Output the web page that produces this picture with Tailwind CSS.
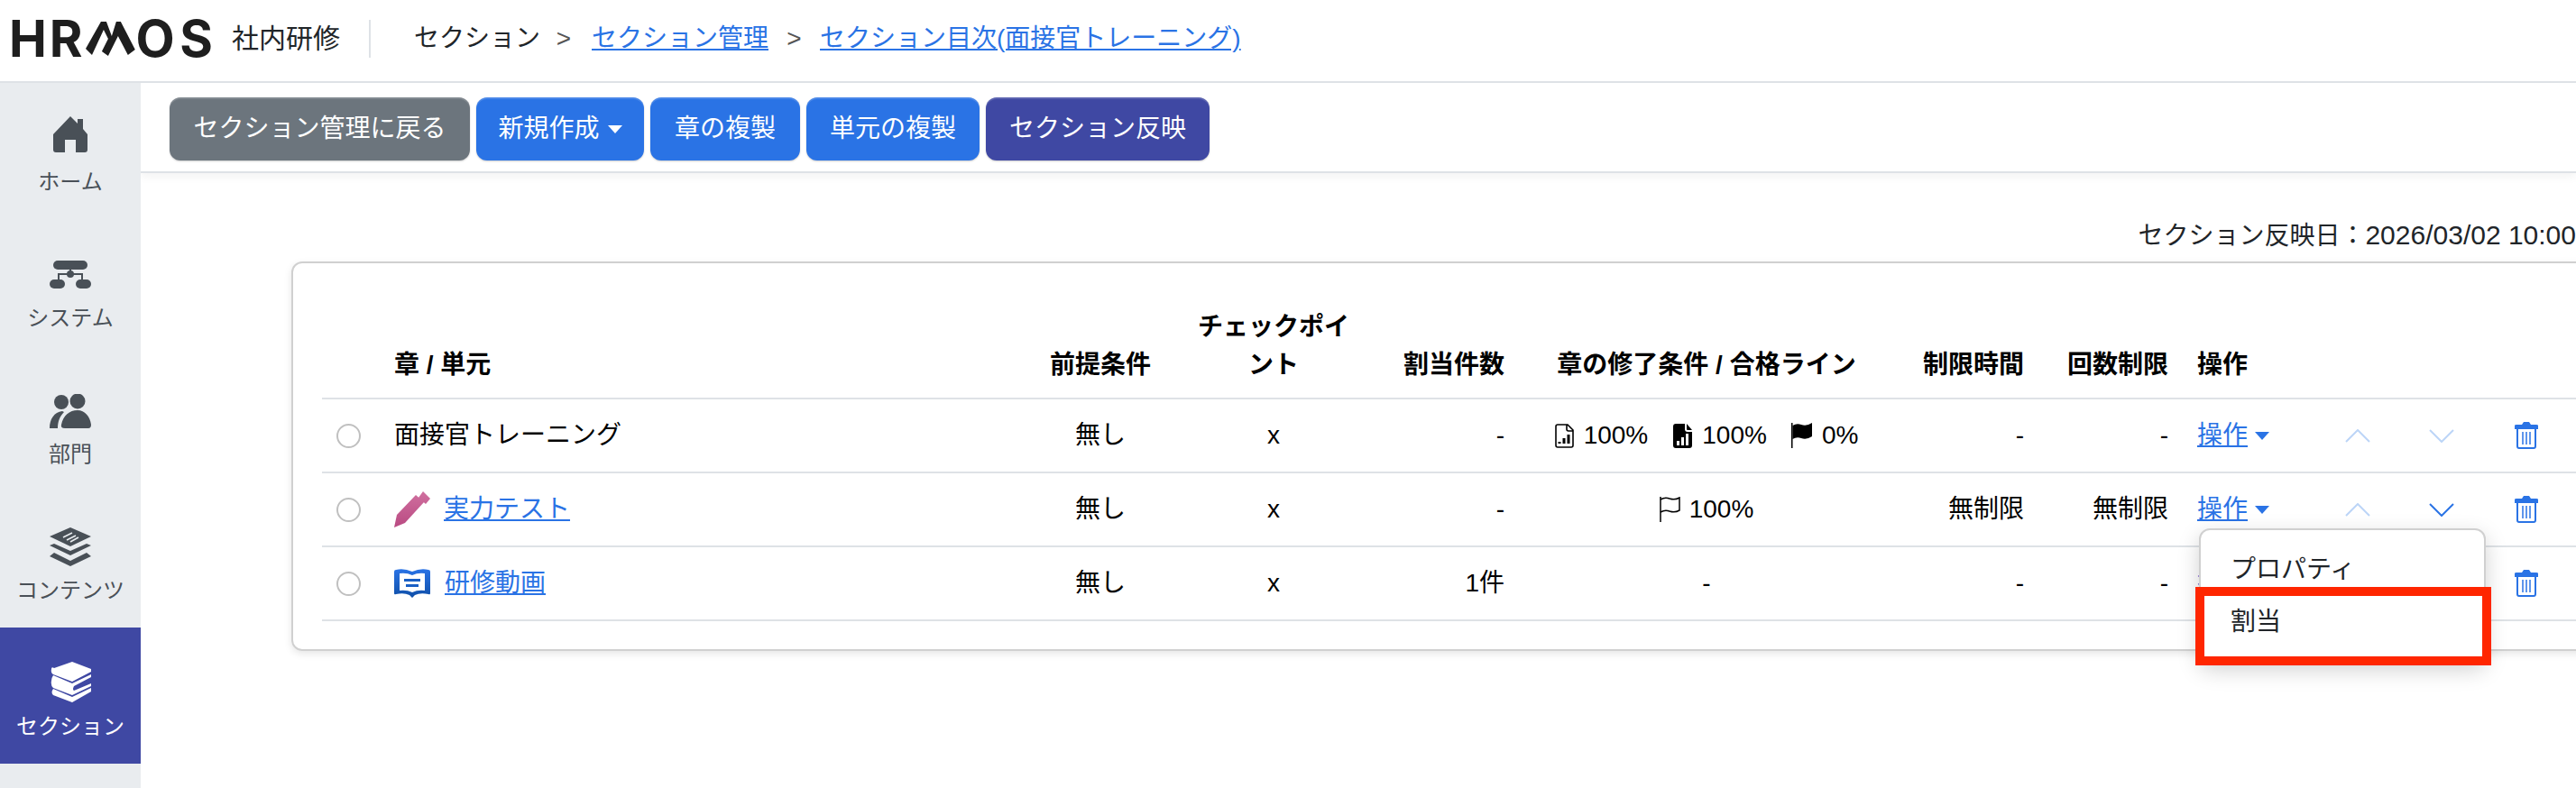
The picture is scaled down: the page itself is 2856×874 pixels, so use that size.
<!DOCTYPE html>
<html lang="ja">
<head>
    <meta charset="UTF-8">
    <title>セクション目次</title>
    <script src="https://cdn.jsdelivr.net/npm/@tailwindcss/browser@4"></script>
</head>
<body class="bg-white text-black text-[28px] leading-[42px] h-[874px] overflow-hidden [font-family:'Liberation_Sans','Noto_Sans_CJK_JP',sans-serif]">
    <!-- header -->
    <header class="h-[92px] border-b-2 border-[#dee2e6] flex items-center pl-[10px] pb-[5px]">
        <div class="flex items-center w-[226px] text-[#1e1e1e] font-bold text-[56px] leading-[56px] [font-family:Inter,sans-serif]">
            <span class="w-[45px]">H</span>
            <span class="w-[40px]">R</span>
            <svg class="w-[55px] h-[40px] mr-[1px]" viewBox="0 0 55 40" fill="#1e1e1e"><path d="M0 31 L17 1 L23 1 L29 17 L34 1 L39 1 L55 32 L47 38 L36 17 L25 39 L18 34 L25 20 L20 10 L7 38 Z"/></svg>
            <span class="w-[49px]">O</span>
            <span>S</span>
        </div>
        <span class="ml-[21px] text-[30px] text-[#212529]">社内研修</span>
        <div class="w-[2px] h-[42px] bg-[#dee2e6] ml-[32px] mr-[48px]"></div>
        <nav class="flex items-center text-[#212529]">
            <span>セクション</span>
            <span class="w-[57px] pr-[5px] text-center text-[#555]">&gt;</span>
            <a class="text-[#2a73e5] underline" href="#">セクション管理</a>
            <span class="w-[57px] text-center text-[#555]">&gt;</span>
            <a class="text-[#2a73e5] underline" href="#">セクション目次(面接官トレーニング)</a>
        </nav>
    </header>

    <div class="flex h-[782px]">
        <!-- side menu -->
        <aside class="w-[156px] shrink-0 bg-[#e9ecef] text-[#495057] text-[24px] leading-[36px] text-center">
            <a class="block h-[151px] pt-[35px]" href="#">
                <div class="h-[46px] flex items-center justify-center">
                    <svg class="w-[38px] h-[40px] -translate-y-[1px]" viewBox="0 0 38 40" fill="#495057"><path d="M19 0 L27 8 L27 3 L33 3 L33 14 L38 20 L38 37 Q38 40 35 40 L25 40 L25 26 L13 26 L13 40 L3 40 Q0 40 0 37 L0 20 Z"/></svg>
                </div>
                <div class="mt-[11px]">ホーム</div>
            </a>
            <a class="block h-[151px] pt-[35px]" href="#">
                <div class="h-[46px] flex items-center justify-center">
                    <svg class="w-[46px] h-[31px] translate-y-[3px]" viewBox="0 0 46 31" fill="#495057">
                        <rect x="4" y="0" width="38" height="10" rx="5"/>
                        <circle cx="23" cy="15" r="4"/>
                        <rect x="0" y="21" width="17" height="10" rx="5"/>
                        <rect x="29" y="21" width="17" height="10" rx="5"/>
                        <path d="M22 9h2v5h13v8h-2v-6H11v6H9v-8h13z"/>
                    </svg>
                </div>
                <div class="mt-[11px]">システム</div>
            </a>
            <a class="block h-[151px] pt-[35px]" href="#">
                <div class="h-[46px] flex items-center justify-center">
                    <svg class="w-[46px] h-[38px] translate-y-[4px]" viewBox="0 0 46 38" fill="#495057">
                        <circle cx="13" cy="9" r="8"/>
                        <circle cx="31" cy="8" r="8.5"/>
                        <path d="M0 38 C0 28 5 20 14 19 L16 20 C11 25 9 31 9 38 Z"/>
                        <path d="M17 38 Q12 38 13 34 C15 24 22 18 31 18 C39 18 45 25 46 34 Q46 38 43 38 Z"/>
                    </svg>
                </div>
                <div class="mt-[11px]">部門</div>
            </a>
            <a class="block h-[151px] pt-[35px]" href="#">
                <div class="h-[46px] flex items-center justify-center">
                    <svg class="w-[46px] h-[43px] translate-y-[3px]" viewBox="0 0 46 43" fill="#495057">
                        <path d="M23 0 L46 10 L23 21 L0 10 Z"/>
                        <path d="M5 18 L23 26 L41 18 L46 20 L23 31 L0 20 Z"/>
                        <path d="M5 28 L23 37 L41 28 L46 32 L23 43 L0 32 Z"/>
                        <path d="M15 11 L25 6 M19 14 L29 9 M23 16 L32 11" stroke="#e9ecef" stroke-width="1.6"/>
                    </svg>
                </div>
                <div class="mt-[11px]">コンテンツ</div>
            </a>
            <a class="block h-[151px] pt-[35px] bg-[#3f48a3] text-white" href="#">
                <div class="h-[46px] flex items-center justify-center">
                    <svg class="w-[45px] h-[45px] translate-y-[2px]" viewBox="0 0 45 45" fill="#fff">
                        <path d="M24 0 L45 8 L45 11 L24 22 L3 14 Q0 12 1 8 Q1 5 4 7 Z"/>
                        <path d="M3 15 L24 24 L45 14 L45 17 L26 27 Q24 31 26 32 L45 24 L45 27 L24 37 L3 29 Q0 26 1 21 Q1 18 3 15 Z"/>
                        <path d="M3 30 L24 39 L45 29 L45 33 L24 45 L3 37 Q0 34 3 30 Z"/>
                    </svg>
                </div>
                <div class="mt-[11px]">セクション</div>
            </a>
        </aside>

        <main class="flex-1 min-w-0 overflow-hidden">
            <!-- toolbar -->
            <div class="h-[100px] border-b-2 border-[#dee2e6] shadow-[0_4px_10px_rgba(0,0,0,0.05)] pt-[16px] pl-[32px] flex items-start gap-[7px] text-white">
                <button class="h-[70px] w-[333px] rounded-[12px] bg-[#6c757d] shadow-[inset_0_2px_0_rgba(255,255,255,0.15),0_1px_2px_rgba(0,0,0,0.2)]">セクション管理に戻る</button>
                <button class="h-[70px] w-[186px] rounded-[12px] bg-[#2a73e5] shadow-[inset_0_2px_0_rgba(255,255,255,0.15),0_1px_2px_rgba(0,0,0,0.2)] flex items-center justify-center">新規作成<span class="ml-[9px] border-x-[8px] border-x-transparent border-t-[9px] border-t-white"></span></button>
                <button class="h-[70px] w-[166px] rounded-[12px] bg-[#2a73e5] shadow-[inset_0_2px_0_rgba(255,255,255,0.15),0_1px_2px_rgba(0,0,0,0.2)]">章の複製</button>
                <button class="h-[70px] w-[192px] rounded-[12px] bg-[#2a73e5] shadow-[inset_0_2px_0_rgba(255,255,255,0.15),0_1px_2px_rgba(0,0,0,0.2)]">単元の複製</button>
                <button class="h-[70px] w-[248px] rounded-[12px] bg-[#3f48a3] shadow-[inset_0_2px_0_rgba(255,255,255,0.15),0_1px_2px_rgba(0,0,0,0.2)]">セクション反映</button>
            </div>

            <div class="h-[90px] pt-[48px] text-right text-[#212529] whitespace-nowrap">セクション反映日：<span class="text-[30px]">2026/03/02 10:00</span></div>

            <!-- card -->
            <div class="relative mt-[8px] ml-[167px] w-[2600px] h-[432px] border-2 border-[#d0d0d0] rounded-[12px] shadow-[0_3px_8px_rgba(0,0,0,0.1)] pt-[33px] pl-[32px]">
                <table class="table-fixed w-[2530px]">
                    <colgroup>
                        <col class="w-[64px]"><col class="w-[727px]"><col class="w-[144px]"><col class="w-[240px]"><col class="w-[152px]"><col class="w-[416px]"><col class="w-[160px]"><col class="w-[160px]"><col class="w-[148px]"><col class="w-[92px]"><col class="w-[94px]"><col class="w-[94px]"><col>
                    </colgroup>
                    <thead>
                        <tr class="h-[117px] border-b-2 border-[#dee2e6] font-bold align-bottom">
                            <th class="pb-[15px]"></th>
                            <th class="pb-[15px] px-[16px] text-left">章 / 単元</th>
                            <th class="pb-[15px] text-center">前提条件</th>
                            <th class="pb-[15px] text-center">チェックポイ<br>ント</th>
                            <th class="pb-[15px] px-[16px] text-right">割当件数</th>
                            <th class="pb-[15px] text-center">章の修了条件 / 合格ライン</th>
                            <th class="pb-[15px] px-[16px] text-right">制限時間</th>
                            <th class="pb-[15px] px-[16px] text-right">回数制限</th>
                            <th class="pb-[15px] px-[16px] text-left">操作</th>
                            <th></th><th></th><th></th><th></th>
                        </tr>
                    </thead>
                    <tbody>
                        <tr class="h-[82px] border-b-2 border-[#dee2e6]">
                            <td><div class="w-[27px] h-[27px] rounded-full border-2 border-[#c0c0c0] ml-[16px]"></div></td>
                            <td class="px-[16px]">面接官トレーニング</td>
                            <td class="text-center">無し</td>
                            <td class="text-center">x</td>
                            <td class="px-[16px] text-right">-</td>
                            <td>
                                <div class="flex items-center justify-center gap-[11px] whitespace-nowrap">
                                    <svg class="w-[21px] h-[27px]" viewBox="0 0 21 27" fill="none" stroke="#000" stroke-width="1.6"><path d="M3 1 H14 L20 7 V24 Q20 26 18 26 H3 Q1 26 1 24 V3 Q1 1 3 1 Z M13 1 V6 Q13 8 15 8 H20"/><path d="M5 22 V20 M10 22 V16 M15 22 V12" stroke-width="3"/></svg>
                                    <span>100%</span>
                                    <svg class="w-[21px] h-[27px] ml-[17px]" viewBox="0 0 21 27" fill="#000"><path d="M3 0 H13 V6 Q13 9 16 9 H21 V24 Q21 27 18 27 H3 Q0 27 0 24 V3 Q0 0 3 0 Z M15 0 L21 7 H16 Q15 7 15 6 Z"/><path d="M4 19 H7 V24 H4 Z M9 15 H12 V24 H9 Z M14 11 H17 V24 H14 Z" fill="#fff"/></svg>
                                    <span>100%</span>
                                    <svg class="w-[23px] h-[28px] ml-[16px]" viewBox="0 0 23 28" fill="#000"><path d="M0 0 H1.5 V28 H0 Z"/><path d="M1.5 3 Q6 0 11 2 Q17 4 23 0 V15 Q17 19 11 17 Q6 15 1.5 18 Z"/></svg>
                                    <span>0%</span>
                                </div>
                            </td>
                            <td class="px-[16px] text-right">-</td>
                            <td class="px-[16px] text-right">-</td>
                            <td class="px-[16px]"><a class="inline-flex items-center text-[#2a73e5]" href="#"><span class="underline">操作</span><span class="ml-[8px] border-x-[8px] border-x-transparent border-t-[9px] border-t-[#2a73e5]"></span></a></td>
                            <td><svg class="mx-auto w-[28px] h-[15px]" viewBox="0 0 28 15" fill="none" stroke="#bcd5f7" stroke-width="2"><path d="M1 14 L14 1 L27 14"/></svg></td>
                            <td><svg class="mx-auto w-[28px] h-[15px]" viewBox="0 0 28 15" fill="none" stroke="#bcd5f7" stroke-width="2"><path d="M1 1 L14 14 L27 1"/></svg></td>
                            <td><svg class="mx-auto w-[26px] h-[30px]" viewBox="0 0 26 30" fill="none" stroke="#2a73e5" stroke-width="2"><path d="M3 7 V27 Q3 29 5 29 H21 Q23 29 23 27 V7"/><path d="M9 11 V25 M13 11 V25 M17 11 V25" stroke-width="1.5"/><path d="M0 8 V4 Q0 3 2 3 H8 L10 0 H16 L18 3 H24 Q26 3 26 4 V8 Z" fill="#2a73e5" stroke="none"/></svg></td>
                            <td></td>
                        </tr>
                        <tr class="h-[82px] border-b-2 border-[#dee2e6]">
                            <td><div class="w-[27px] h-[27px] rounded-full border-2 border-[#c0c0c0] ml-[16px]"></div></td>
                            <td class="px-[16px]">
                                <div class="flex items-center gap-[15px]">
                                    <svg class="w-[40px] h-[40px]" viewBox="0 0 40 40"><defs><linearGradient id="pen" x1="0" y1="1" x2="0" y2="0"><stop offset="0" stop-color="#b94a82"/><stop offset="1" stop-color="#d0709f"/></linearGradient></defs><path d="M0 40 L3 26 L24 4 L33 12 L12 35 Z M27 7 L32 0 L40 8 L35 14 Z" fill="url(#pen)"/></svg>
                                    <a class="text-[#2a73e5] underline" href="#">実力テスト</a>
                                </div>
                            </td>
                            <td class="text-center">無し</td>
                            <td class="text-center">x</td>
                            <td class="px-[16px] text-right">-</td>
                            <td>
                                <div class="flex items-center justify-center gap-[10px] whitespace-nowrap">
                                    <svg class="w-[23px] h-[28px]" viewBox="0 0 23 28" fill="none" stroke="#000" stroke-width="1.5"><path d="M1 0 V28"/><path d="M1 3 Q6 0 11 2 Q17 4 22 1 V15 Q17 18 11 16 Q6 14 1 17"/></svg>
                                    <span>100%</span>
                                </div>
                            </td>
                            <td class="px-[16px] text-right whitespace-nowrap">無制限</td>
                            <td class="px-[16px] text-right whitespace-nowrap">無制限</td>
                            <td class="px-[16px]"><a class="inline-flex items-center text-[#2a73e5]" href="#"><span class="underline">操作</span><span class="ml-[8px] border-x-[8px] border-x-transparent border-t-[9px] border-t-[#2a73e5]"></span></a></td>
                            <td><svg class="mx-auto w-[28px] h-[15px]" viewBox="0 0 28 15" fill="none" stroke="#bcd5f7" stroke-width="2"><path d="M1 14 L14 1 L27 14"/></svg></td>
                            <td><svg class="mx-auto w-[28px] h-[15px]" viewBox="0 0 28 15" fill="none" stroke="#2a73e5" stroke-width="2"><path d="M1 1 L14 14 L27 1"/></svg></td>
                            <td><svg class="mx-auto w-[26px] h-[30px]" viewBox="0 0 26 30" fill="none" stroke="#2a73e5" stroke-width="2"><path d="M3 7 V27 Q3 29 5 29 H21 Q23 29 23 27 V7"/><path d="M9 11 V25 M13 11 V25 M17 11 V25" stroke-width="1.5"/><path d="M0 8 V4 Q0 3 2 3 H8 L10 0 H16 L18 3 H24 Q26 3 26 4 V8 Z" fill="#2a73e5" stroke="none"/></svg></td>
                            <td></td>
                        </tr>
                        <tr class="h-[82px] border-b-2 border-[#dee2e6]">
                            <td><div class="w-[27px] h-[27px] rounded-full border-2 border-[#c0c0c0] ml-[16px]"></div></td>
                            <td class="px-[16px]">
                                <div class="flex items-center gap-[16px]">
                                    <svg class="w-[40px] h-[32px]" viewBox="0 0 40 32"><defs><linearGradient id="bk" x1="0" y1="0" x2="0" y2="1"><stop offset="0" stop-color="#2a73e5"/><stop offset="1" stop-color="#0f4fa8"/></linearGradient></defs><path d="M2 1 Q11 -1 20 3 Q29 -1 38 1 Q40 1 40 3 V27 Q40 29 38 28 Q29 26 23 29 L20 32 L17 29 Q11 26 2 28 Q0 29 0 27 V3 Q0 1 2 1 Z" fill="url(#bk)"/><path d="M6 5 Q14 4 20 7 Q26 4 34 5 V24 Q26 23 20 26 Q14 23 6 24 Z" fill="#fff"/><path d="M11 11 H29 V14 H11 Z M13 17 H27 V20 H13 Z" fill="#1a5fc4"/></svg>
                                    <a class="text-[#2a73e5] underline" href="#">研修動画</a>
                                </div>
                            </td>
                            <td class="text-center">無し</td>
                            <td class="text-center">x</td>
                            <td class="px-[16px] text-right">1件</td>
                            <td class="text-center">-</td>
                            <td class="px-[16px] text-right">-</td>
                            <td class="px-[16px] text-right">-</td>
                            <td class="px-[16px]"><a class="inline-flex items-center text-[#2a73e5]" href="#"><span class="underline">操作</span><span class="ml-[8px] border-x-[8px] border-x-transparent border-t-[9px] border-t-[#2a73e5]"></span></a></td>
                            <td></td>
                            <td></td>
                            <td><svg class="mx-auto w-[26px] h-[30px]" viewBox="0 0 26 30" fill="none" stroke="#2a73e5" stroke-width="2"><path d="M3 7 V27 Q3 29 5 29 H21 Q23 29 23 27 V7"/><path d="M9 11 V25 M13 11 V25 M17 11 V25" stroke-width="1.5"/><path d="M0 8 V4 Q0 3 2 3 H8 L10 0 H16 L18 3 H24 Q26 3 26 4 V8 Z" fill="#2a73e5" stroke="none"/></svg></td>
                            <td></td>
                        </tr>
                    </tbody>
                </table>

                <!-- dropdown menu, positioned against the card -->
                <div class="absolute left-[2113px] top-[294px] w-[318px] h-[149px] pt-[15px] bg-white border-2 border-[#d0d0d0] rounded-[12px] shadow-[0_8px_24px_rgba(0,0,0,0.18)] text-[#212529]">
                    <div class="h-[58px] pl-[33px] flex items-center">プロパティ</div>
                    <div class="h-[58px] pl-[33px] flex items-center">割当</div>
                </div>
                <!-- red annotation box -->
                <div class="absolute left-[2109px] top-[359px] w-[328px] h-[87px] border-[10px] border-[#ff2600]"></div>
            </div>
        </main>
    </div>
</body>
</html>
